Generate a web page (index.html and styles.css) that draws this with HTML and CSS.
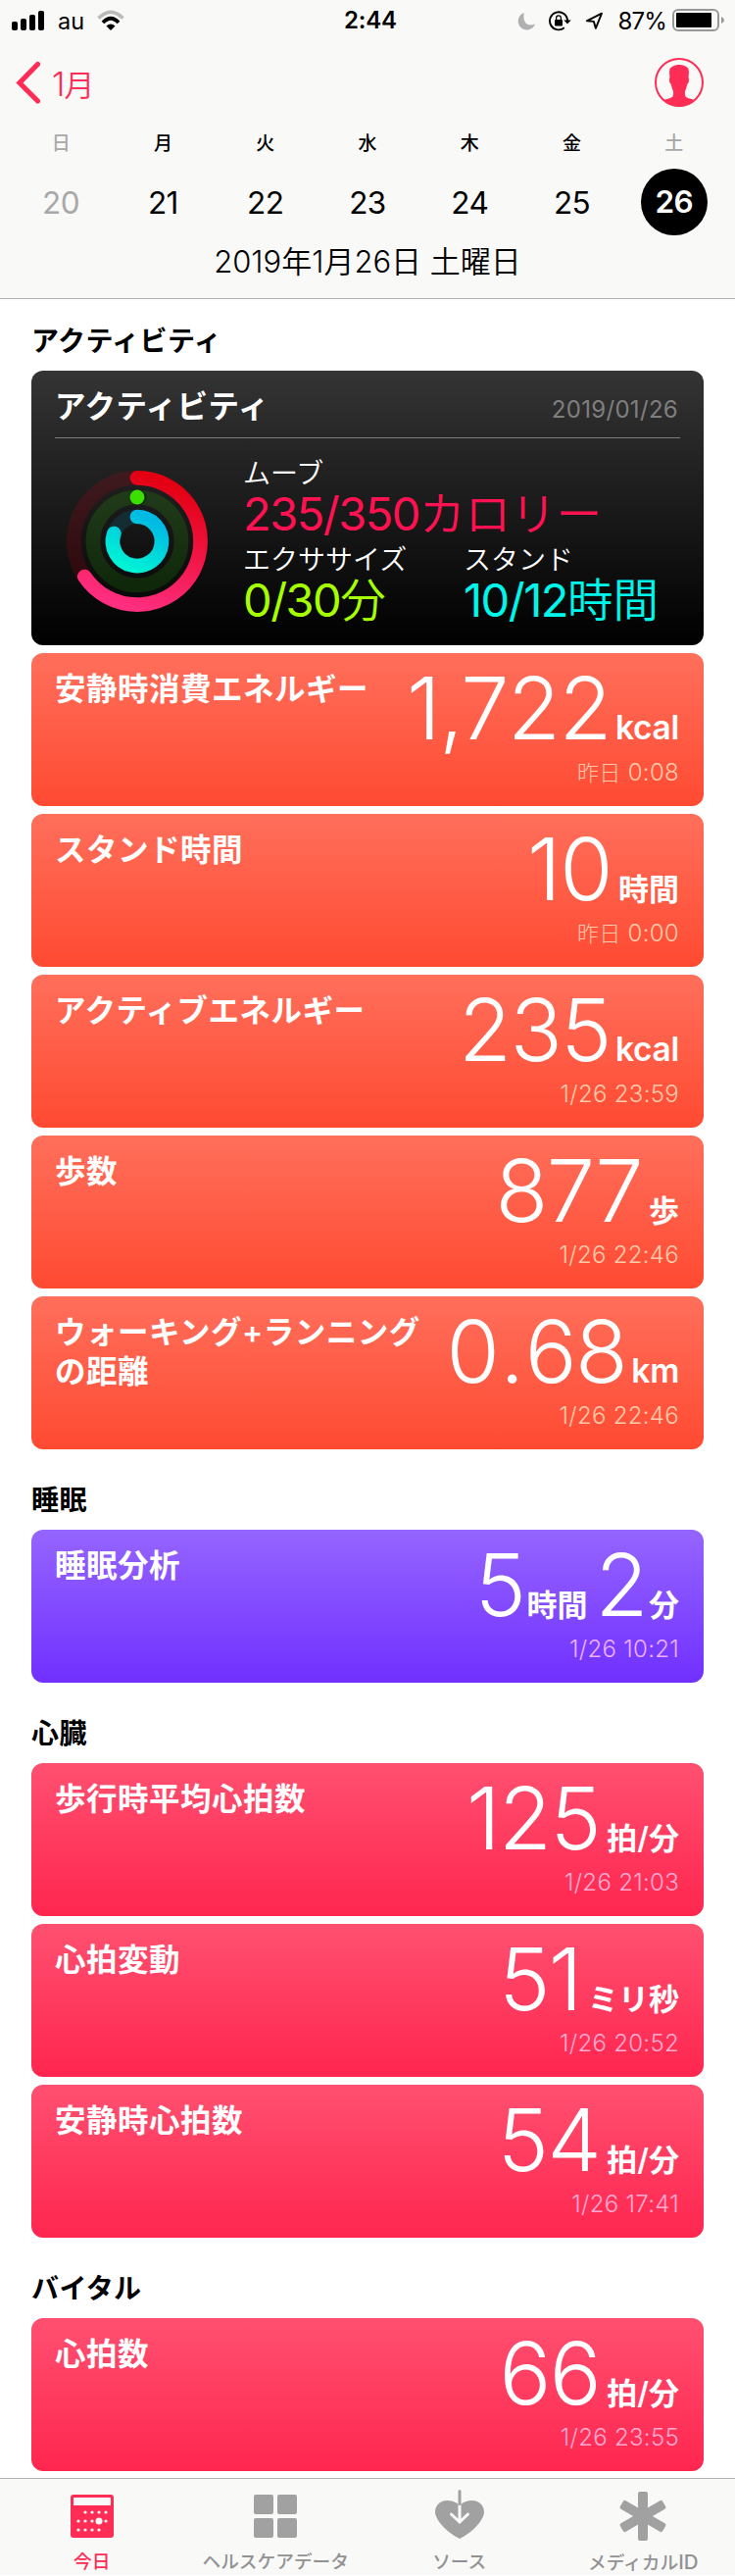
FILE: index.html
```html
<!DOCTYPE html>
<html lang="ja">
<head>
<meta charset="utf-8">
<title>ヘルスケア</title>
<link rel="stylesheet" href="styles.css">
</head>
<body>
<header class="top">
  <div class="status">
    <div class="status-left">
      <svg width="34" height="22" viewBox="0 0 34 22"><rect x="0" y="12" width="6" height="9" rx="2"/><rect x="9" y="9" width="6" height="12" rx="2"/><rect x="18" y="5" width="6" height="16" rx="2"/><rect x="27" y="1" width="6" height="20" rx="2"/></svg>
      <span class="carrier">au</span>
      <svg class="wifi" width="28" height="22" viewBox="0 0 28 22"><path d="M1.500 8.500Q14-4 26.500 8.500" fill="none" stroke="#bababa" stroke-width="3.600"/><path d="M6 13Q14 4.500 22 13" fill="none" stroke="#000" stroke-width="3.800"/><path d="M9.500 16.500Q14 12.500 18.500 16.500L14 21Z"/></svg>
    </div>
    <span class="clock">2:44</span>
    <div class="status-right">
      <svg class="moon" width="19" height="19" viewBox="0 0 19 19"><path d="M7 1A8.900 8.900 0 1 0 18 12.500Q10 15.500 7.200 9.500Q5.500 5 7 1Z" fill="#b0b0b0"/></svg>
      <svg class="lock" width="23" height="21" viewBox="0 0 23 21"><path d="M15.800 17.200A9 9 0 1 1 19 10" fill="none" stroke="#000" stroke-width="1.900"/><path d="M15.300 9.500H22.700L19 13.500Z"/><rect x="6" y="9" width="8" height="6.500" rx="1"/><path d="M7.600 9V7.200a2.400 2.400 0 0 1 4.800 0V9" fill="none" stroke="#000" stroke-width="1.300"/></svg>
      <svg class="loc" width="19" height="19" viewBox="0 0 19 19"><path d="M17 1.700L1.800 9.300L8.900 9.900L10.900 16.900Z" fill="none" stroke="#000" stroke-width="1.900" stroke-linejoin="round"/></svg>
      <span class="percent">87%</span>
      <svg width="53" height="24" viewBox="0 0 53 24"><rect x="1" y="1" width="46" height="21" rx="5" fill="none" stroke="#989898" stroke-width="2"/><rect x="4" y="4" width="36" height="15" rx="1"/><path d="M50 8Q53 9.500 53 11.500T50 15Z" fill="#989898"/></svg>
    </div>
  </div>
  <nav class="nav">
    <a class="back"><svg width="26" height="44" viewBox="0 0 26 44"><path d="M23.500 3.500L5 22.500L23.500 41" fill="none" stroke="#ff2d55" stroke-width="5.200" stroke-linecap="round" stroke-linejoin="miter"/></svg><span>1<i>月</i></span></a>
    <svg width="50" height="50" viewBox="0 0 50 50"><circle cx="25" cy="25" r="24" fill="none" stroke="#ff2d55" stroke-width="2"/><path d="M9 43Q17 41 18.500 39.500Q19.500 37 19 34Q17.500 31 16.800 27Q15 26 15 22Q15 20 15.500 20Q14.500 15 15.500 11Q19 7 25 7T34.500 11Q35.500 15 34.500 20Q35 20 35 22Q35 26 33.200 27Q32.500 31 31 34Q30.500 37 31.500 39.500Q33 41 41 43Q34 50 25 50T9 43Z" fill="#ff2d55"/></svg>
  </nav>
  <div class="week names"><span class="dim">日</span><span>月</span><span>火</span><span>水</span><span>木</span><span>金</span><span class="dim">土</span></div>
  <div class="week days"><span class="dim">20</span><span>21</span><span>22</span><span>23</span><span>24</span><span>25</span><span class="selected">26</span></div>
  <div class="full-date">2019年1月26日 土曜日</div>
</header>

<main>
  <section class="first">
    <h2>アクティビティ</h2>
    <article class="card activity">
      <div class="activity-head"><h3>アクティビティ</h3><time>2019/01/26</time></div>
      <div class="activity-body">
        <svg class="rings" width="144" height="144" viewBox="-72 -72 144 144">
          <defs>
            <linearGradient id="move" x1=".6" y1="0" x2=".3" y2="1"><stop offset="0" stop-color="#e30012"/><stop offset="1" stop-color="#ff2e80"/></linearGradient>
            <linearGradient id="stand" x1=".7" y1="0" x2=".2" y2="1"><stop offset="0" stop-color="#00b9e4"/><stop offset="1" stop-color="#00f3d5"/></linearGradient>
            <linearGradient id="move-track" x1="0" y1="0" x2="0" y2="1"><stop offset="0" stop-color="#3e1a1f"/><stop offset="1" stop-color="#290508"/></linearGradient>
            <linearGradient id="exercise-track" x1="0" y1="0" x2="0" y2="1"><stop offset="0" stop-color="#203a19"/><stop offset="1" stop-color="#10280a"/></linearGradient>
          </defs>
          <g fill="none" stroke-width="14.700" stroke-linecap="round">
            <circle r="64.600" stroke="url(#move-track)"/>
            <circle r="45" stroke="url(#exercise-track)"/>
            <circle r="25" stroke="#142c33"/>
            <path d="M0-64.600A64.600 64.600 0 1 1-53.700 36" stroke="url(#move)"/>
            <path d="M0-25A25 25 0 1 1-23.700-8" stroke="url(#stand)"/>
          </g>
          <circle cx="2" cy="-45" r="7.600" fill="#12280e"/>
          <circle cy="-45" r="7.400" fill="#3be000"/>
        </svg>
        <div class="stats">
          <div class="stat wide"><span>ムーブ</span><b class="move">235/350<i>カロリー</i></b></div>
          <div class="stat"><span>エクササイズ</span><b class="exercise">0/30<i>分</i></b></div>
          <div class="stat"><span>スタンド</span><b class="stand">10/12<i>時間</i></b></div>
        </div>
      </div>
    </article>
    <article class="card orange"><h3>安静時消費エネルギー</h3><div class="reading"><p>1,722<small class="latin">kcal</small></p><time><span class="day">昨日</span> 0:08</time></div></article>
    <article class="card orange"><h3>スタンド時間</h3><div class="reading"><p>10<small>時間</small></p><time><span class="day">昨日</span> 0:00</time></div></article>
    <article class="card orange"><h3>アクティブエネルギー</h3><div class="reading"><p>235<small class="latin">kcal</small></p><time>1/26 23:59</time></div></article>
    <article class="card orange"><h3>歩数</h3><div class="reading"><p>877<small>歩</small></p><time>1/26 22:46</time></div></article>
    <article class="card orange"><h3>ウォーキング+ランニング<br>の距離</h3><div class="reading"><p>0<span class="point">.</span>68<small class="latin">km</small></p><time>1/26 22:46</time></div></article>
  </section>
  <section>
    <h2>睡眠</h2>
    <article class="card purple"><h3>睡眠分析</h3><div class="reading duration"><p>5<small>時間</small><span class="minutes">2</span><small>分</small></p><time>1/26 10:21</time></div></article>
  </section>
  <section>
    <h2>心臓</h2>
    <article class="card pink"><h3>歩行時平均心拍数</h3><div class="reading"><p>125<small>拍/分</small></p><time>1/26 21:03</time></div></article>
    <article class="card pink"><h3>心拍変動</h3><div class="reading"><p>51<small>ミリ秒</small></p><time>1/26 20:52</time></div></article>
    <article class="card pink"><h3>安静時心拍数</h3><div class="reading"><p>54<small>拍/分</small></p><time>1/26 17:41</time></div></article>
  </section>
  <section>
    <h2>バイタル</h2>
    <article class="card pink"><h3>心拍数</h3><div class="reading"><p>66<small>拍/分</small></p><time>1/26 23:55</time></div></article>
  </section>
</main>

<footer class="tabs">
  <a class="tab active">
    <svg width="54" height="54" viewBox="0 0 54 54"><rect x="5" y="6" width="44" height="44" rx="3" fill="#ff2d55"/><g fill="#f9f9f8"><rect x="8" y="9" width="38" height="8"/><circle cx="20" cy="24" r="1.600"/><circle cx="27" cy="24" r="1.600"/><circle cx="34" cy="24" r="1.600"/><circle cx="41" cy="24" r="1.600"/><circle cx="13" cy="33" r="1.600"/><circle cx="20" cy="33" r="1.600"/><circle cx="27" cy="33" r="1.600"/><circle cx="34" cy="33" r="3.500"/><circle cx="41" cy="33" r="1.600"/><circle cx="13" cy="42" r="1.600"/><circle cx="20" cy="42" r="1.600"/><circle cx="27" cy="42" r="1.600"/><circle cx="34" cy="42" r="1.600"/></g></svg>
    <span>今日</span>
  </a>
  <a class="tab">
    <svg width="54" height="54" viewBox="0 0 54 54"><g fill="#a1a1a1"><rect x="5" y="6" width="20" height="20" rx="2"/><rect x="29" y="6" width="20" height="20" rx="2"/><rect x="5" y="30" width="20" height="20" rx="2"/><rect x="29" y="30" width="20" height="20" rx="2"/></g></svg>
    <span>ヘルスケアデータ</span>
  </a>
  <a class="tab">
    <svg width="54" height="54" viewBox="0 0 54 54"><path d="M27 51Q15 45 7 35Q2 28 2 24C2 17 7 12 14 12Q22 12 27 17Q32 12 40 12C47 12 52 17 52 24Q52 28 47 35Q39 45 27 51Z" fill="#a1a1a1"/><path d="M27 17V33M18.500 26L27 34L35.500 26" fill="none" stroke="#f9f9f8" stroke-width="3" stroke-linecap="round"/><path d="M27 2.500V15.500" stroke="#a1a1a1" stroke-width="3" stroke-linecap="round"/></svg>
    <span>ソース</span>
  </a>
  <a class="tab">
    <svg width="54" height="54" viewBox="0 0 54 54"><g fill="#a1a1a1"><rect x="22" y="3" width="10" height="50" rx="2"/><rect x="22" y="3" width="10" height="50" rx="2" transform="rotate(60 27 28)"/><rect x="22" y="3" width="10" height="50" rx="2" transform="rotate(-60 27 28)"/></g></svg>
    <span>メディカル<span class="roman">ID</span></span>
  </a>
</footer>
</body>
</html>
```
FILE: styles.css
```css
* { box-sizing: border-box; }
body {
  margin: 0;
  width: 750px;
  height: 2627px;
  overflow: hidden;
  background: #fff;
  color: #000;
  font-family: Inter, "Noto Sans CJK JP", sans-serif;
}
svg { display: block; flex: none; }
h2, h3, p { margin: 0; }

.top {
  height: 305px;
  background: #f9f9f8;
  border-bottom: 1px solid #b2b2b2;
}
.status {
  display: grid;
  grid-template-columns: 1fr auto 1fr;
  height: 40px;
  padding: 0 11px 0 12px;
  font-size: 24px;
  line-height: 40px;
}
.status-left, .status-right { display: flex; align-items: center; }
.status-right { justify-content: flex-end; }
.carrier { margin: 2px 0 0 13px; font-size: 23.5px; }
.wifi { margin-left: 13px; }
.clock { font-weight: 600; padding: 1px 0 0 5px; letter-spacing: -0.2px; }
.moon { margin-right: 13px; }
.lock { margin-right: 14px; }
.loc { margin-right: 14px; }
.percent { margin: 2px 6px 0 0; letter-spacing: -0.8px; }

.nav {
  display: flex;
  justify-content: space-between;
  align-items: center;
  height: 88px;
  padding: 0 32px 0 16px;
}
.back {
  display: flex;
  align-items: center;
  gap: 12px;
  color: #ff2d55;
  font-size: 34px;
  font-weight: 360;
  letter-spacing: -1px;
}
.back svg { margin-left: -1px; }
.back i { font-size: 31px; font-style: normal; letter-spacing: 0; }
.week {
  display: grid;
  grid-template-columns: repeat(7, 1fr);
  justify-items: center;
  align-items: center;
  padding: 0 10px;
}
.names { height: 32px; font-size: 19px; font-weight: 500; }
.days { height: 92px; font-size: 31.5px; font-weight: 390; letter-spacing: -0.5px; }
.dim { color: #a8a8a8; }
.selected {
  width: 68px;
  height: 68px;
  border-radius: 50%;
  background: #000;
  color: #fff;
  font-weight: 600;
  line-height: 68px;
  text-align: center;
}
.full-date {
  height: 44px;
  margin-top: -7px;
  text-align: center;
  font-size: 31px;
  font-weight: 360;
  line-height: 44px;
}

main { padding: 0 32px; }
section { display: flex; flex-direction: column; gap: 8px; }
h2 {
  height: 82px;
  margin-bottom: -8px;
  padding-top: 32px;
  font-size: 28px;
  font-weight: 600;
  line-height: 40px;
  letter-spacing: 0.4px;
}
.first h2 { height: 73px; padding-top: 23px; }

.card {
  display: flex;
  justify-content: space-between;
  height: 156px;
  padding: 0 25px 0 24px;
  border-radius: 12px;
  color: #fff;
}
.card h3 {
  padding-top: 17px;
  font-size: 31.5px;
  font-weight: 600;
  line-height: 40px;
  letter-spacing: 0.5px;
  white-space: nowrap;
}
.orange { background: linear-gradient(#ff6f5b, #ff4a32); }
.purple { background: linear-gradient(#9565ff, #7030ff); }
.pink { background: linear-gradient(#ff5070, #ff264f); }
.reading { text-align: right; white-space: nowrap; }
.reading p {
  height: 112px;
  font-size: 88px;
  font-weight: 290;
  line-height: 112px;
  letter-spacing: -1.5px;
}
.reading small {
  margin-left: 7px;
  font-size: 31px;
  font-weight: 600;
  line-height: 0;
  letter-spacing: 0;
}
.reading .latin { margin-left: 5px; font-size: 33.5px; font-weight: 560; letter-spacing: -0.3px; }
.point { margin: 0 2px; }
.reading time {
  display: block;
  font-size: 24px;
  font-weight: 360;
  line-height: 20px;
  letter-spacing: 0.3px;
}
.day { font-size: 22px; font-weight: 300; }
.reading.duration small { margin-left: 2px; }
.minutes { margin-left: 8px; }
.orange time { color: #ffcbac; }
.purple time { color: #eeb0ff; }
.pink time { color: #ffabd2; }

.activity {
  flex-direction: column;
  justify-content: flex-start;
  height: 280px;
  padding: 0 24px;
  background: linear-gradient(#343434, #000);
}
.activity-head {
  display: flex;
  justify-content: space-between;
  height: 69px;
  border-bottom: 1px solid #7d7d7d;
}
.activity-head time {
  padding: 20px 2px 0 0;
  color: #7f7f7f;
  font-size: 24px;
  font-weight: 380;
  line-height: 40px;
  letter-spacing: 0.3px;
}
.activity-body { display: flex; padding-left: 12px; }
.rings { margin-top: 33px; }
.stats {
  display: grid;
  grid-template-columns: 225px 1fr;
  grid-template-rows: 88px 88px;
  margin: 21px 0 0 36px;
}
.stat { display: flex; flex-direction: column; white-space: nowrap; }
.wide { grid-column: 1 / -1; }
.stat span { font-size: 28px; font-weight: 340; line-height: 30px; }
.stat b { font-size: 47px; font-weight: 380; line-height: 52px; letter-spacing: -1.5px; }
.stat i { font-size: 46.5px; font-style: normal; font-weight: 340; letter-spacing: 0; }
.move { color: #ff1152; }
.exercise { color: #a6ff00; }
.stand { color: #00f6ea; }

.tabs {
  display: grid;
  grid-template-columns: repeat(4, 1fr);
  height: 99px;
  margin-top: 7px;
  border-top: 1px solid #b2b2b2;
  background: #f9f9f8;
}
.tab {
  display: flex;
  flex-direction: column;
  align-items: center;
  padding-top: 10px;
  color: #929292;
  font-size: 18.7px;
  font-weight: 500;
  line-height: 42px;
}
.roman { font-size: 20.5px; }
.active { color: #ff2d55; }
```
